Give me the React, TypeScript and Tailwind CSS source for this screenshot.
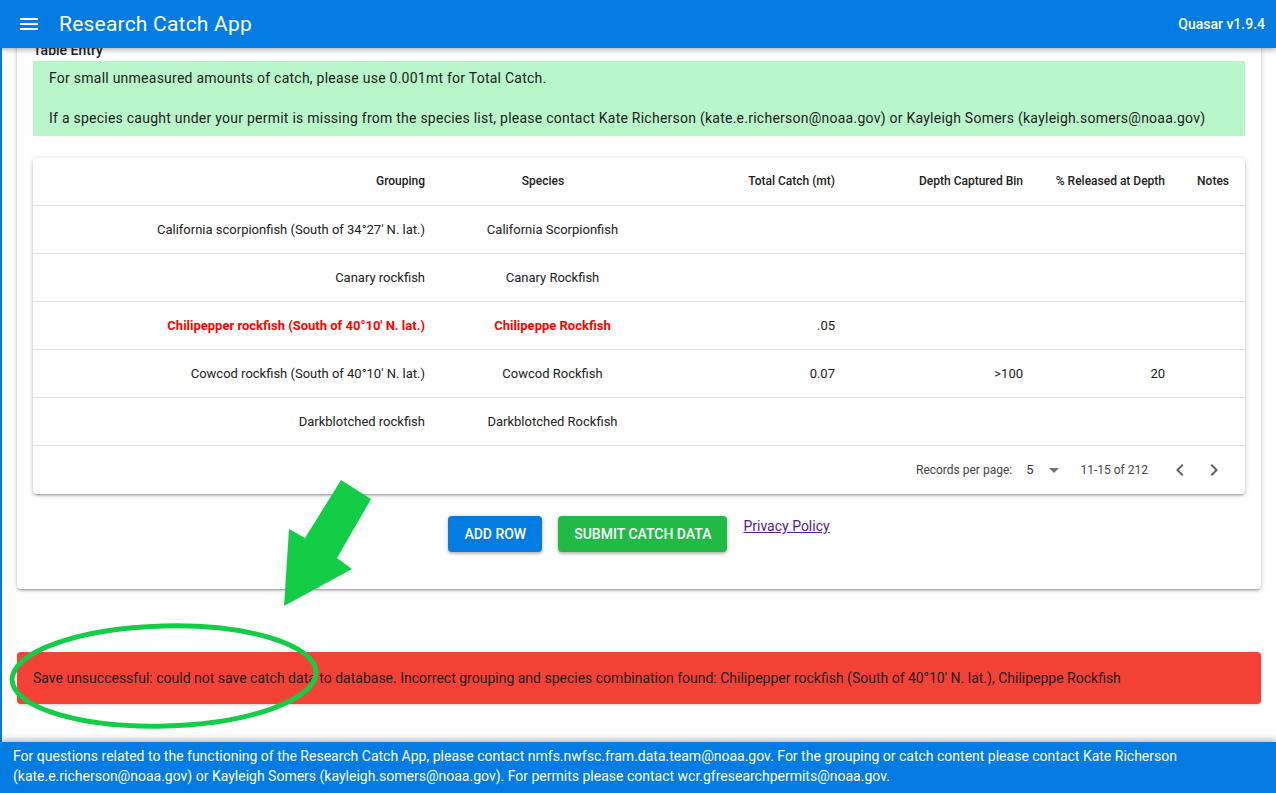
import React from 'react'

const rows = [
  { grouping: 'California scorpionfish (South of 34°27\' N. lat.)', species: 'California Scorpionfish', catch: '', depth: '', released: '', bad: false },
  { grouping: 'Canary rockfish', species: 'Canary Rockfish', catch: '', depth: '', released: '', bad: false },
  { grouping: 'Chilipepper rockfish (South of 40°10\' N. lat.)', species: 'Chilipeppe Rockfish', catch: '.05', depth: '', released: '', bad: true },
  { grouping: 'Cowcod rockfish (South of 40°10\' N. lat.)', species: 'Cowcod Rockfish', catch: '0.07', depth: '>100', released: '20', bad: false },
  { grouping: 'Darkblotched rockfish', species: 'Darkblotched Rockfish', catch: '', depth: '', released: '', bad: false },
]

const cols = 'grid grid-cols-[408px_223px_187px_188px_142px_64px]'

function MenuIcon() {
  return (
    <svg width="24" height="24" viewBox="0 0 24 24" fill="#fff">
      <path d="M3 18h18v-2H3v2zm0-5h18v-2H3v2zm0-7v2h18V6H3z" />
    </svg>
  )
}

function Chevron({ dir }: { dir: 'left' | 'right' }) {
  return (
    <svg width="24" height="24" viewBox="0 0 24 24" fill="#616161">
      {dir === 'left'
        ? <path d="M15.41 7.41L14 6l-6 6 6 6 1.41-1.41L10.83 12z" />
        : <path d="M10 6L8.59 7.41 13.17 12l-4.58 4.59L10 18l6-6z" />}
    </svg>
  )
}

export default function App() {
  return (
    <div className="relative flex flex-col h-[793px] w-full overflow-hidden bg-white text-[#212121]" style={{ fontFamily: "Roboto, 'Liberation Sans', sans-serif" }}>
      <header className="relative z-10 flex items-center h-12 shrink-0 bg-[#027be3] text-white shadow-[0_2px_5px_rgba(0,0,0,0.3)]">
        <div className="ml-[17px] flex items-center"><MenuIcon /></div>
        <h1 className="ml-[18px] text-[21px] leading-none tracking-[0.01em]">Research Catch App</h1>
        <div className="ml-auto mr-[11px] text-[14px] font-medium">Quasar v1.9.4</div>
      </header>

      <main className="flex-1 min-h-0 overflow-hidden border-l-2 border-[#027be3] px-[15px]">
        <div className="-mt-[24px] rounded-[4px] bg-white px-4 pt-4 pb-[37px] shadow-[0_1px_5px_rgba(0,0,0,0.2),0_2px_2px_rgba(0,0,0,0.14),0_3px_1px_-2px_rgba(0,0,0,0.12)]">
          <div className="text-[14px] leading-5 font-medium">Table Entry</div>
          <div className="mt-px bg-[#b9f6ca] pl-4 pt-[7px] pb-[8px] text-[14px] leading-5 tracking-[0.245px]">
            <p>For small unmeasured amounts of catch, please use 0.001mt for Total Catch.</p>
            <p className="mt-5">If a species caught under your permit is missing from the species list, please contact Kate Richerson (kate.e.richerson@noaa.gov) or Kayleigh Somers (kayleigh.somers@noaa.gov)</p>
          </div>

          <div className="mt-[22px] rounded-[4px] bg-white shadow-[0_1px_5px_rgba(0,0,0,0.2),0_2px_2px_rgba(0,0,0,0.14),0_3px_1px_-2px_rgba(0,0,0,0.12)]">
            <div className={`${cols} h-12 items-center border-b border-[#e0e0e0] pb-[2px] text-[12px] font-medium`}>
              <div className="px-4 text-right">Grouping</div>
              <div className="pl-4 pr-[35px] text-center">Species</div>
              <div className="px-4 text-right">Total Catch (mt)</div>
              <div className="px-4 text-right">Depth Captured Bin</div>
              <div className="px-4 text-right">% Released at Depth</div>
              <div className="px-4 text-right">Notes</div>
            </div>
            {rows.map((r) => (
              <div key={r.species} className={`${cols} h-12 items-center border-b border-[#e0e0e0] text-[13px]`}>
                <div className={`px-4 text-right ${r.bad ? 'font-bold text-[#ff0000]' : ''}`}>{r.grouping}</div>
                <div className={`px-4 text-center ${r.bad ? 'font-bold text-[#ff0000]' : ''}`}>{r.species}</div>
                <div className="px-4 text-right">{r.catch}</div>
                <div className="px-4 text-right">{r.depth}</div>
                <div className="px-4 text-right">{r.released}</div>
                <div className="px-4 text-right"></div>
              </div>
            ))}
            <div className="flex h-12 items-center justify-end pr-[14px] text-[12px] text-[#444]">
              <span>Records per page:</span>
              <span className="ml-[14px] text-[13px] text-[#333]">5</span>
              <svg className="ml-[15px]" width="10" height="5" viewBox="0 0 10 5" fill="#757575"><path d="M0 0h10L5 5z" /></svg>
              <span className="ml-[22px]">11-15 of 212</span>
              <div className="ml-[15px] flex">
                <div className="flex w-[34px] justify-center"><Chevron dir="left" /></div>
                <div className="flex w-[34px] justify-center"><Chevron dir="right" /></div>
              </div>
            </div>
          </div>

          <div className="mt-[22px] flex items-start justify-center gap-4">
            <button className="h-9 rounded-[4px] bg-[#027be3] px-4 text-[14px] font-medium uppercase text-white shadow-[0_1px_5px_rgba(0,0,0,0.2),0_2px_2px_rgba(0,0,0,0.14)]">Add Row</button>
            <button className="h-9 rounded-[4px] bg-[#21ba45] px-4 text-[14px] font-medium uppercase text-white shadow-[0_1px_5px_rgba(0,0,0,0.2),0_2px_2px_rgba(0,0,0,0.14)]">Submit Catch Data</button>
            <a href="#" className="text-[14px] leading-5 text-[#551a8b] underline">Privacy Policy</a>
          </div>
        </div>

        <div className="mt-[63px] flex h-[52px] items-center rounded-[4px] bg-[#f44336] px-4 text-[14px] text-[#1d1d1d] shadow-[0_1px_3px_rgba(0,0,0,0.2)]">
          Save unsuccessful: could not save catch data to database. Incorrect grouping and species combination found: Chilipepper rockfish (South of 40°10' N. lat.), Chilipeppe Rockfish
        </div>
      </main>

      <footer className="relative z-10 shrink-0 bg-[#027be3] pl-[13px] pr-3 pt-1 pb-[7px] text-[14px] leading-5 text-white shadow-[0_-3px_6px_rgba(0,0,0,0.25)]">
        For questions related to the functioning of the Research Catch App, please contact nmfs.nwfsc.fram.data.team@noaa.gov. For the grouping or catch content please contact Kate Richerson (kate.e.richerson@noaa.gov) or Kayleigh Somers (kayleigh.somers@noaa.gov). For permits please contact wcr.gfresearchpermits@noaa.gov.
      </footer>

      <svg className="pointer-events-none absolute left-0 top-0 z-20" width="1276" height="793" viewBox="0 0 1276 793">
        <polygon points="341,480 371,499 337,558 352,569 284,606 289,529 305,538" fill="#12cd45" />
        <ellipse cx="164" cy="676" rx="152" ry="50" fill="none" stroke="#12cd45" strokeWidth="5" transform="rotate(-1.5 164 676)" />
      </svg>
    </div>
  )
}
